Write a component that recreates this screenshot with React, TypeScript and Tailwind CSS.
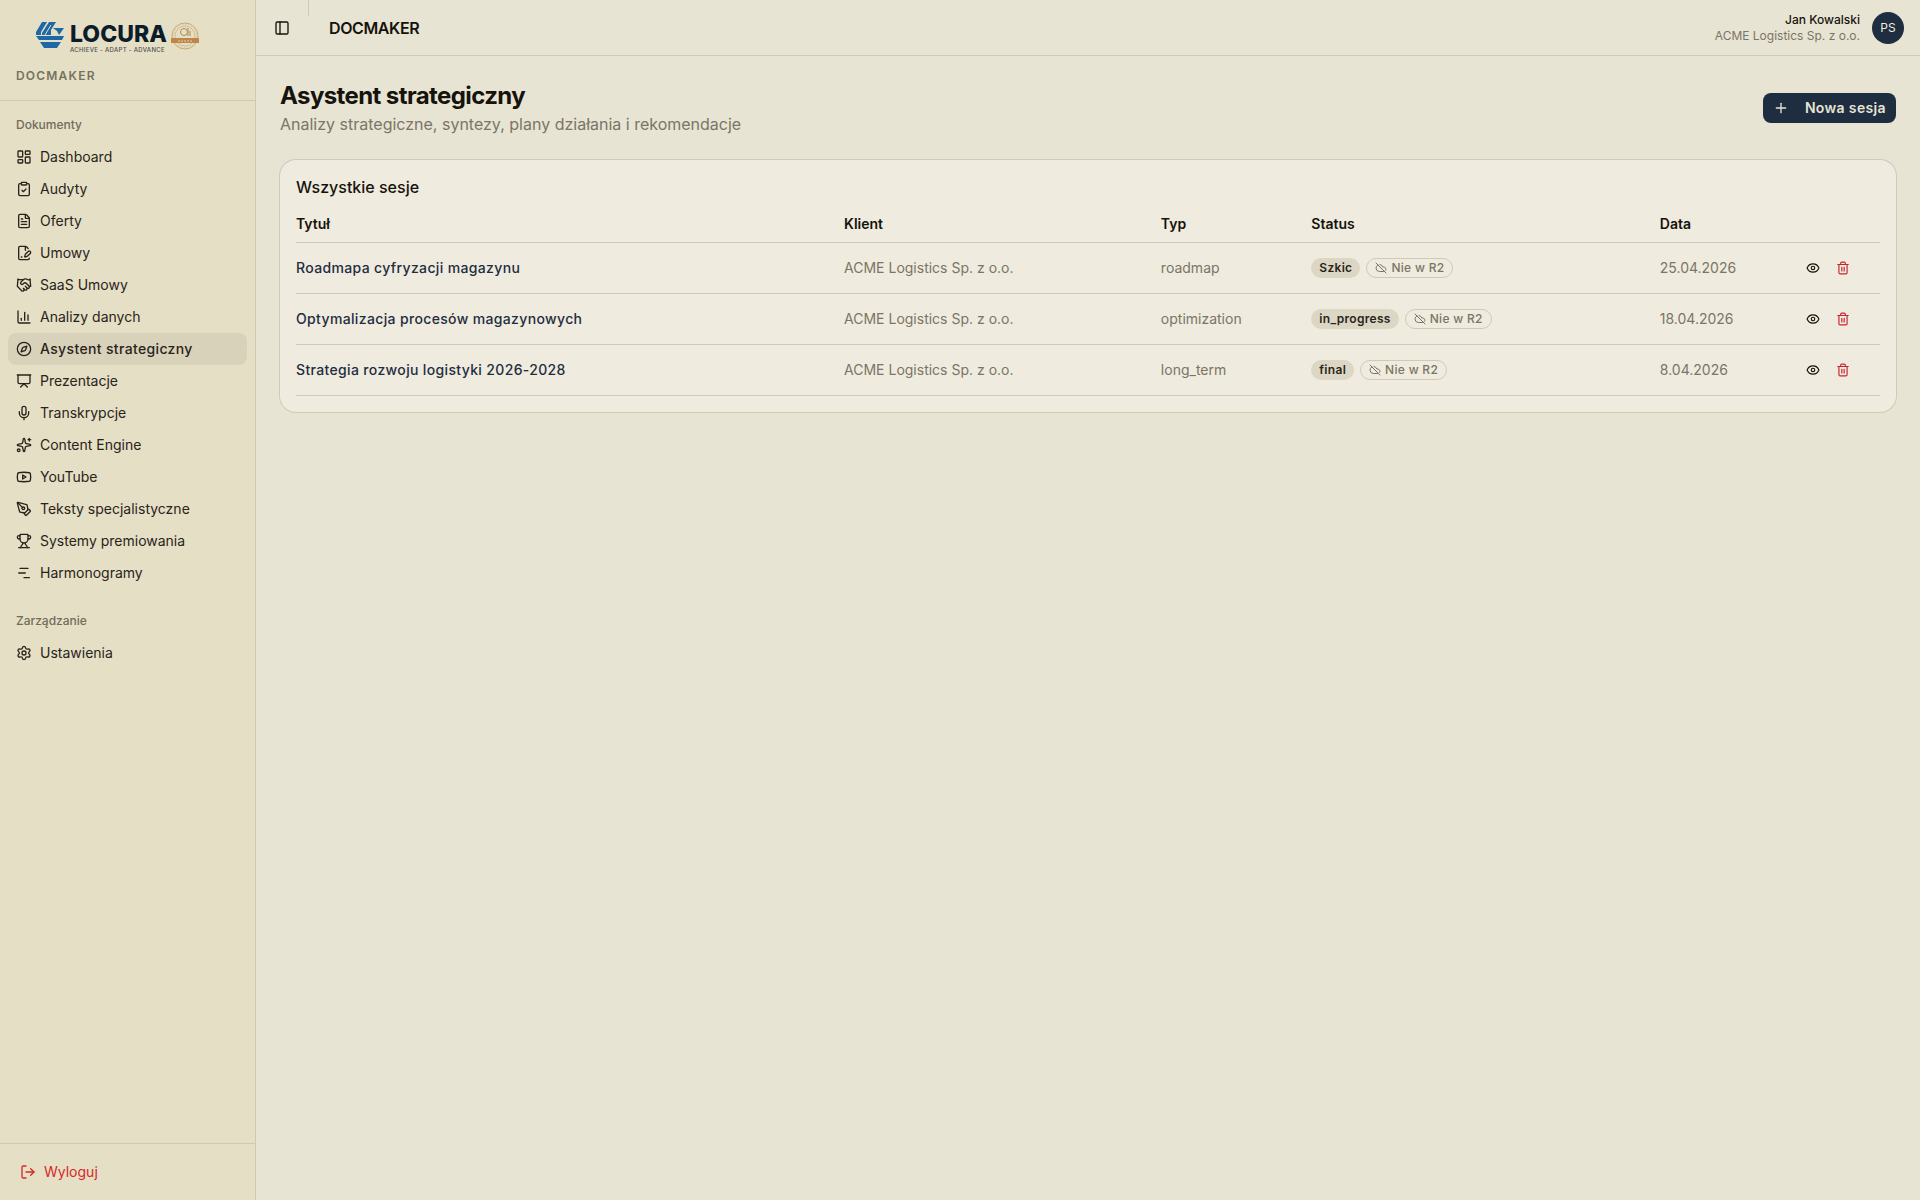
import type { ComponentType } from "react"
import {
  ChartColumn,
  ClipboardCheck,
  CloudOff,
  Compass,
  Eye,
  FileText,
  Handshake,
  LayoutDashboard,
  LogOut,
  Mic,
  PanelLeft,
  PenTool,
  Plus,
  Presentation,
  Settings,
  Sparkles,
  Trash2,
  Trophy,
} from "lucide-react"

type Icon = ComponentType<{ className?: string; strokeWidth?: number }>

function YoutubeIcon({ className }: { className?: string }) {
  return (
    <svg viewBox="0 0 24 24" className={className} fill="none" stroke="currentColor" strokeWidth="2" strokeLinecap="round" strokeLinejoin="round">
      <path d="M2.5 17a24.12 24.12 0 0 1 0-10 2 2 0 0 1 1.4-1.4 49.56 49.56 0 0 1 16.2 0A2 2 0 0 1 21.5 7a24.12 24.12 0 0 1 0 10 2 2 0 0 1-1.4 1.4 49.55 49.55 0 0 1-16.2 0A2 2 0 0 1 2.5 17" />
      <path d="m10 15 5-3-5-3z" />
    </svg>
  )
}

function ContractIcon({ className }: { className?: string }) {
  return (
    <svg viewBox="0 0 24 24" className={className} fill="none" stroke="currentColor" strokeWidth="2" strokeLinecap="round" strokeLinejoin="round">
      <path d="M14.364 13.634a2 2 0 0 0-.506.854l-.837 2.87a.5.5 0 0 0 .62.62l2.87-.837a2 2 0 0 0 .854-.506l4.013-4.009a1 1 0 0 0-3.004-3.004z" />
      <path d="M14.487 7.858A1 1 0 0 1 14 7V2" />
      <path d="M20 19.645V20a2 2 0 0 1-2 2H6a2 2 0 0 1-2-2V4a2 2 0 0 1 2-2h8a2.4 2.4 0 0 1 1.704.706l2.516 2.516" />
      <path d="M8 18h1" />
    </svg>
  )
}

function GanttIcon({ className }: { className?: string }) {
  return (
    <svg viewBox="0 0 24 24" className={className} fill="none" stroke="currentColor" strokeWidth="2" strokeLinecap="round" strokeLinejoin="round">
      <path d="M6 5h12" />
      <path d="M4 12h10" />
      <path d="M12 19h8" />
    </svg>
  )
}

const documents: { label: string; icon: Icon; active?: boolean }[] = [
  { label: "Dashboard", icon: LayoutDashboard },
  { label: "Audyty", icon: ClipboardCheck },
  { label: "Oferty", icon: FileText },
  { label: "Umowy", icon: ContractIcon },
  { label: "SaaS Umowy", icon: Handshake },
  { label: "Analizy danych", icon: ChartColumn },
  { label: "Asystent strategiczny", icon: Compass, active: true },
  { label: "Prezentacje", icon: Presentation },
  { label: "Transkrypcje", icon: Mic },
  { label: "Content Engine", icon: Sparkles },
  { label: "YouTube", icon: YoutubeIcon },
  { label: "Teksty specjalistyczne", icon: PenTool },
  { label: "Systemy premiowania", icon: Trophy },
  { label: "Harmonogramy", icon: GanttIcon },
]

const management = [{ label: "Ustawienia", icon: Settings }]

const sessions = [
  { title: "Roadmapa cyfryzacji magazynu", type: "roadmap", status: "Szkic", date: "25.04.2026" },
  { title: "Optymalizacja procesów magazynowych", type: "optimization", status: "in_progress", date: "18.04.2026" },
  { title: "Strategia rozwoju logistyki 2026-2028", type: "long_term", status: "final", date: "8.04.2026" },
]

function Logo() {
  return (
    <div className="flex h-8 items-start pl-5">
      <svg viewBox="0 0 28 26" className="mt-1 h-[26px] w-7" fill="#1f68a8">
        <path d="M6 0h5L5 10v3H0v-3z" />
        <path d="M13 0h7l-5 8v5H6v-2z" />
        <path d="M17 6h11l-5 7-2-4z" />
        <path d="M0 14h28l-2 4H3z" />
        <path d="M4 20h21l-4 6H8z" />
        <path d="M9 13l6-10" stroke="#e5dfc5" fill="none" />
      </svg>
      <div className="ml-1.5 flex flex-col">
        <span className="pt-1 text-[23px] leading-6 font-extrabold text-[#0b1c2b]">LOCURA</span>
        <span className="text-[6px] leading-2 font-medium tracking-wider whitespace-nowrap text-[#4d5050]">ACHIEVE - ADAPT - ADVANCE</span>
      </div>
      <svg viewBox="0 0 28 28" className="mt-1 ml-1 size-7" fill="none">
        <circle cx="14" cy="14" r="13" stroke="#c6a974" />
        <circle cx="14" cy="14" r="10" stroke="#d2bd92" />
        <circle cx="14" cy="14" r="11.5" stroke="#d2bd92" strokeDasharray="1 2" />
        <circle cx="13" cy="10" r="3.5" stroke="#b08a50" />
        <path d="M17 6v8M19 9v5" stroke="#b08a50" />
        <path d="M0 16h28v5H0z" fill="#bf864a" />
        <path d="M7 19h14" stroke="#e5cfa4" strokeDasharray="2 1" />
      </svg>
    </div>
  )
}

function NavGroup({ label, items }: { label: string; items: typeof documents }) {
  return (
    <div className="flex flex-col p-2">
      <div className="flex h-8 items-center px-2 text-xs font-medium text-[#716c5c]">{label}</div>
      <ul>
        {items.map(({ label, icon: ItemIcon, active }) => (
          <li key={label}>
            <a
              href="#"
              className={
                active
                  ? "flex h-8 items-center gap-2 rounded-lg bg-[#d8d2bb] px-2 text-sm font-medium tracking-wide"
                  : "flex h-8 items-center gap-2 rounded-lg px-2 text-sm"
              }
            >
              <ItemIcon className="size-4 shrink-0" />
              <span>{label}</span>
            </a>
          </li>
        ))}
      </ul>
    </div>
  )
}

function Sidebar() {
  return (
    <aside className="flex w-64 shrink-0 flex-col border-r border-[#cfc9b4] bg-[#e5dfc5] text-[#29241a]">
      <div className="flex h-[101px] flex-col border-b border-[#cfc9b4] px-4 pt-[18px]">
        <Logo />
        <div className="mt-4 text-xs leading-5 font-semibold tracking-widest text-[#77725f]">DOCMAKER</div>
      </div>
      <nav className="flex-1">
        <NavGroup label="Dokumenty" items={documents} />
        <NavGroup label="Zarządzanie" items={management} />
      </nav>
      <div className="border-t border-[#cfc9b4] p-2">
        <button className="flex h-10 w-full items-center gap-2 px-3 text-sm text-[#d62828]">
          <LogOut className="size-4" />
          Wyloguj
        </button>
      </div>
    </aside>
  )
}

function Header() {
  return (
    <header className="flex h-14 items-center justify-between border-b border-[#cfcab8] px-4">
      <div className="flex h-full items-center">
        <button aria-label="Panel boczny" className="flex size-5 items-center justify-center">
          <PanelLeft className="size-4" />
        </button>
        <div className="ml-4 h-4 w-px self-start bg-[#cfcab8]" />
        <span className="ml-5 text-base font-semibold tracking-tight">DOCMAKER</span>
      </div>
      <div className="flex items-center gap-3">
        <div className="text-right text-xs">
          <div className="font-medium">Jan Kowalski</div>
          <div className="text-[#7a7566]">ACME Logistics Sp. z o.o.</div>
        </div>
        <div className="flex size-8 items-center justify-center rounded-full bg-[#1e2d40] text-xs text-[#efebde]">PS</div>
      </div>
    </header>
  )
}

function SessionsTable() {
  return (
    <table className="w-full table-fixed border-separate border-spacing-0 text-left text-sm [&_td]:border-b [&_td]:border-[#cfcab8] [&_th]:border-b [&_th]:border-[#cfcab8]">
      <colgroup>
        <col className="w-[34.6%]" />
        <col className="w-[20%]" />
        <col className="w-[9.5%]" />
        <col className="w-[22%]" />
        <col className="w-[8.7%]" />
        <col />
      </colgroup>
      <thead>
        <tr className="h-[41px]">
          <th className="pt-1 font-semibold">Tytuł</th>
          <th className="pt-1 font-semibold">Klient</th>
          <th className="pt-1 font-semibold">Typ</th>
          <th className="pt-1 font-semibold">Status</th>
          <th className="pt-1 font-semibold">Data</th>
          <th />
        </tr>
      </thead>
      <tbody>
        {sessions.map((s) => (
          <tr key={s.title} className="h-[51px] text-[#7a7566]">
            <td>
              <a href="#" className="font-medium tracking-wide text-[#1e2d40]">{s.title}</a>
            </td>
            <td>ACME Logistics Sp. z o.o.</td>
            <td>{s.type}</td>
            <td>
              <div className="flex items-center gap-1.5">
                <span className="flex h-5 items-center rounded-full bg-[#dcd7c5] px-2 text-xs font-semibold tracking-wide text-[#29241a]">{s.status}</span>
                <span className="flex h-5 items-center gap-1 rounded-full border border-[#cfcab8] px-2 text-xs font-medium tracking-wide">
                  <CloudOff className="size-3" strokeWidth={2} />
                  Nie w R2
                </span>
              </div>
            </td>
            <td>{s.date}</td>
            <td>
              <div className="flex gap-px">
                <button aria-label="Podgląd" className="flex h-7 w-[30px] items-center justify-center text-[#16130c]">
                  <Eye className="size-3.5" />
                </button>
                <button aria-label="Usuń" className="flex size-7 items-center justify-center text-[#c9252d]">
                  <Trash2 className="size-3.5" />
                </button>
              </div>
            </td>
          </tr>
        ))}
      </tbody>
    </table>
  )
}

export default function App() {
  return (
    <div className="flex min-h-screen bg-[#e7e4d3] font-[Inter,sans-serif] text-[#16130c]">
      <Sidebar />
      <div className="min-w-0 flex-1">
        <Header />
        <main className="flex flex-col gap-6 p-6">
          <div className="flex items-center justify-between">
            <div>
              <h1 className="text-2xl font-bold tracking-tight">Asystent strategiczny</h1>
              <p className="text-[#7a7566]">Analizy strategiczne, syntezy, plany działania i rekomendacje</p>
            </div>
            <button className="flex h-[30px] items-center gap-4 rounded-lg bg-[#1e2d40] px-2.5 text-sm font-semibold tracking-wide text-[#e7e4d3]">
              <Plus className="size-4" />
              Nowa sesja
            </button>
          </div>
          <section className="rounded-2xl bg-[#efebde] p-4 ring-1 ring-[#cfcab8]">
            <h2 className="mb-1 text-base leading-[22px] font-medium">Wszystkie sesje</h2>
            <SessionsTable />
          </section>
        </main>
      </div>
    </div>
  )
}
